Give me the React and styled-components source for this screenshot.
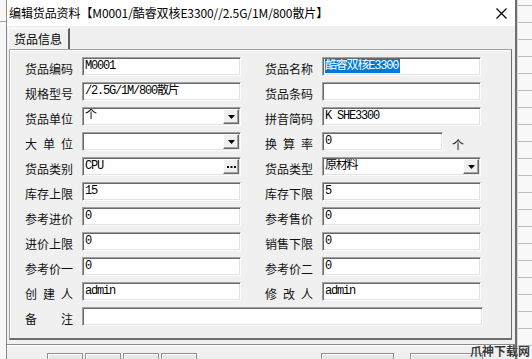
import React from "react";
import styled, { createGlobalStyle } from "styled-components";

const GlobalStyle = createGlobalStyle`
	html, body {
		margin: 0;
		padding: 0;
		width: 532px;
		height: 359px;
		overflow: hidden;
		background: #f0f0f0;
	}
	body {
		font-family: "Noto Sans CJK SC", "Noto Sans", sans-serif;
		color: #000;
	}
`;

const rows = [
	{
		left: { label: "货品编码", value: "M0001" },
		right: { label: "货品名称", value: "酷睿双核E3300", selected: true },
	},
	{
		left: { label: "规格型号", value: "/2.5G/1M/800散片" },
		right: { label: "货品条码", value: "" },
	},
	{
		left: { label: "货品单位", value: "个", button: "drop" },
		right: { label: "拼音简码", value: "K SHE3300" },
	},
	{
		left: { label: "大单位", value: "", button: "drop" },
		right: { label: "换算率", value: "0", short: true, unit: "个" },
	},
	{
		left: { label: "货品类别", value: "CPU", button: "more" },
		right: { label: "货品类型", value: "原材料", button: "drop" },
	},
	{
		left: { label: "库存上限", value: "15" },
		right: { label: "库存下限", value: "5" },
	},
	{
		left: { label: "参考进价", value: "0" },
		right: { label: "参考售价", value: "0" },
	},
	{
		left: { label: "进价上限", value: "0" },
		right: { label: "销售下限", value: "0" },
	},
	{
		left: { label: "参考价一", value: "0" },
		right: { label: "参考价二", value: "0" },
	},
	{
		left: { label: "创建人", value: "admin" },
		right: { label: "修改人", value: "admin" },
	},
];

function Field({ label, value, button, selected, short, unit, wide }) {
	return (
		<>
			<Label>
				{label.split("").map((ch, i) => (
					<span key={i}>{ch}</span>
				))}
			</Label>
			<Input $width={wide ? 401 : short ? 121 : 159}>
				<InputText>
					{selected ? <Selected>{value}</Selected> : value}
				</InputText>
				{button === "drop" && (
					<SmallButton>
						<svg width="7" height="4" viewBox="0 0 7 4">
							<path d="M0 0h7L3.5 4z" fill="#000" />
						</svg>
					</SmallButton>
				)}
				{button === "more" && (
					<SmallButton>
						<svg width="9" height="2" viewBox="0 0 9 2">
							<rect x="0" y="0" width="2" height="2" fill="#000" />
							<rect x="3.5" y="0" width="2" height="2" fill="#000" />
							<rect x="7" y="0" width="2" height="2" fill="#000" />
						</svg>
					</SmallButton>
				)}
			</Input>
			{unit && <Unit>{unit}</Unit>}
		</>
	);
}

function App() {
	return (
		<Screen>
			<GlobalStyle />
			<LeftStrip />
			<Dialog>
				<TitleBar>
					<Title>编辑货品资料【M0001/酷睿双核E3300//2.5G/1M/800散片】</Title>
					<Close>
						<svg width="11" height="11" viewBox="0 0 11 11">
							<path d="M0.5 0.5l10 10M10.5 0.5l-10 10" stroke="#000" strokeWidth="1.2" />
						</svg>
					</Close>
				</TitleBar>
				<TabStrip>
					<Tab>货品信息</Tab>
				</TabStrip>
				<Panel>
					{rows.map((row, i) => (
						<Row key={i}>
							<Half>
								<Field {...row.left} />
							</Half>
							<Half $right>
								<Field {...row.right} />
							</Half>
						</Row>
					))}
					<Row>
						<Half>
							<Label>
								<span>备</span>
								<span>注</span>
							</Label>
							<Input $width={401} />
						</Half>
					</Row>
				</Panel>
				<Footer>
					<ButtonRow>
						<FootButton $w={36} />
						<FootButton $w={36} />
						<FootButton $w={36} />
						<FootButton $w={36} />
						<Spacer $w={120} />
						<FootButton $w={73} />
						<Spacer $w={12} />
						<FootButton $w={73} />
					</ButtonRow>
				</Footer>
			</Dialog>
			<RightStrip />
			<Watermark>爪神下载网</Watermark>
		</Screen>
	);
}

export default App;

const Screen = styled.div`
	position: relative;
	display: flex;
	width: 532px;
	height: 359px;
	overflow: hidden;
`;
const LeftStrip = styled.div`
	width: 6px;
	flex-shrink: 0;
	background: linear-gradient(
		to bottom,
		#f7f7f7 0 21px,
		#a9a9a9 21px 22px,
		#f7f7f7 22px
	);
`;
const RightStrip = styled.div`
	flex: 1;
	border-left: 1px solid #d8d8d8;
	background: repeating-linear-gradient(
		to bottom,
		#f8f8f8 0 5px,
		#bdbdbd 5px 6px,
		#f8f8f8 6px 17px
	);
`;
const Dialog = styled.div`
	width: 511px;
	height: 359px;
	flex-shrink: 0;
	box-sizing: border-box;
	display: flex;
	flex-direction: column;
	overflow: hidden;
	background: #f0f0f0;
	border-left: 1px solid #8a8a8a;
	border-right: 2px solid #6e6e6e;
`;
const TitleBar = styled.div`
	height: 26px;
	flex-shrink: 0;
	display: flex;
	align-items: center;
	justify-content: space-between;
	background: #fff;
	padding: 0 8px 0 2px;
`;
const Title = styled.div`
	font-size: 12px;
	line-height: 26px;
	letter-spacing: -0.1px;
	white-space: nowrap;
`;
const Close = styled.div`
	width: 11px;
	height: 11px;
	display: flex;
`;
const TabStrip = styled.div`
	height: 23px;
	flex-shrink: 0;
	display: flex;
	align-items: flex-end;
	padding-left: 1px;
`;
const Tab = styled.div`
	width: 62px;
	height: 21px;
	box-sizing: border-box;
	border-top: 1px solid #fff;
	border-left: 1px solid #fff;
	border-right: 2px solid #5f5f5f;
	font-size: 12px;
	line-height: 20px;
	padding-left: 5px;
	background: #f0f0f0;
`;
const Panel = styled.div`
	height: 291px;
	flex-shrink: 0;
	margin: 0 3px 0 2px;
	box-sizing: border-box;
	border: 1px solid #a0a0a0;
	border-right-color: #6e6e6e;
	border-bottom: 2px solid #6e6e6e;
	box-shadow: inset 1px 1px 0 #fff;
	padding: 7px 0 0 15px;
	display: flex;
	flex-direction: column;
	gap: 6px;
`;
const Row = styled.div`
	display: flex;
	height: 19px;
	flex-shrink: 0;
`;
const Half = styled.div`
	display: flex;
	margin-left: ${(p) => (p.$right ? "24px" : "0")};
`;
const Label = styled.div`
	width: 48px;
	height: 19px;
	margin-right: 9px;
	padding-top: 3px;
	box-sizing: border-box;
	display: flex;
	justify-content: space-between;
	font-size: 12px;
	line-height: 18px;
	color: #111;
`;
const Input = styled.div`
	width: ${(p) => p.$width}px;
	height: 19px;
	box-sizing: border-box;
	display: flex;
	align-items: center;
	background: #fff;
	border: 1px solid;
	border-color: #a0a0a0 #fcfcfc #fcfcfc #a0a0a0;
	box-shadow: inset 1px 1px 0 #6a6a6a, inset -1px -1px 0 #e3e3e3;
	padding: 0 1px 0 2px;
`;
const InputText = styled.div`
	flex: 1;
	font-family: "Liberation Mono", "Noto Sans CJK SC", monospace;
	font-size: 12px;
	letter-spacing: -1.2px;
	line-height: 15px;
	white-space: nowrap;
	overflow: hidden;
`;
const Selected = styled.span`
	background: #0078d7;
	color: #fff;
	padding-right: 2px;
`;
const SmallButton = styled.div`
	width: 16px;
	height: 15px;
	box-sizing: border-box;
	display: flex;
	align-items: center;
	justify-content: center;
	background: #f0f0f0;
	border: 1px solid;
	border-color: #fff #6a6a6a #6a6a6a #fff;
	box-shadow: inset -1px -1px 0 #a0a0a0;
`;
const Unit = styled.div`
	font-size: 12px;
	line-height: 18px;
	padding-top: 4px;
	margin-left: 9px;
	color: #111;
`;
const Footer = styled.div`
	flex: 1;
	min-height: 0;
	padding-top: 4px;
	overflow: hidden;
`;
const ButtonRow = styled.div`
	display: flex;
	gap: 2px;
	height: 30px;
	box-sizing: border-box;
	border-top: 1px solid #8a8a8a;
	padding: 8px 0 0 40px;
	box-shadow: inset 0 1px 0 #fff;
`;
const FootButton = styled.div`
	width: ${(p) => p.$w}px;
	height: 20px;
	flex-shrink: 0;
	box-sizing: border-box;
	background: #e8e8e8;
	border: 1px solid #8f8f8f;
	box-shadow: inset 1px 1px 0 #fff;
`;
const Spacer = styled.div`
	width: ${(p) => p.$w}px;
	flex-shrink: 0;
`;
const Watermark = styled.div`
	position: absolute;
	right: 2px;
	bottom: 0;
	font-size: 12px;
	font-weight: 700;
	line-height: 17px;
	color: #3a3a3a;
	text-shadow: 0 0 1px #fff;
`;
